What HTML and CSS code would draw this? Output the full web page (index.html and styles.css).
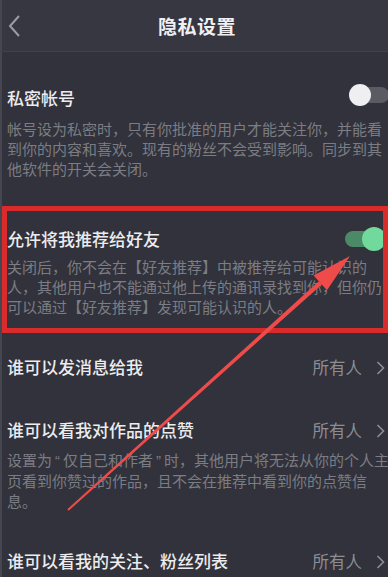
FILE: index.html
```html
<!DOCTYPE html>
<html lang="zh-CN">
<head>
<meta charset="utf-8">
<title>隐私设置</title>
<link rel="stylesheet" href="styles.css">
</head>
<body>
<div class="page">
  <header class="topbar">
    <svg class="back" width="14" height="24" viewBox="0 0 14 24"><path d="M12 2 L3 12 L12 22" fill="none" stroke="#9c9da3" stroke-width="2"/></svg>
    <h1 class="page-title">隐私设置</h1>
  </header>
  <main class="list">
    <section class="item item-private">
      <div class="row">
        <span class="title">私密帐号</span>
        <span class="switch switch-off"><span class="knob"></span></span>
      </div>
      <p class="desc">帐号设为私密时，只有你批准的用户才能关注你，并能看<br>到你的内容和喜欢。现有的粉丝不会受到影响。同步到其<br>他软件的开关会关闭。</p>
    </section>
    <section class="item item-recommend">
      <div class="row">
        <span class="title">允许将我推荐给好友</span>
        <span class="switch switch-on"><span class="knob"></span></span>
      </div>
      <p class="desc">关闭后，你不会在【好友推荐】中被推荐给可能认识的<br>人，其他用户也不能通过他上传的通讯录找到你，但你仍<br>可以通过【好友推荐】发现可能认识的人。</p>
    </section>
    <section class="item item-message">
      <div class="row">
        <span class="title">谁可以发消息给我</span>
        <span class="value">所有人<svg class="chev" width="9" height="14" viewBox="0 0 9 14"><path d="M1.5 1 L7.5 7 L1.5 13" fill="none" stroke="#8d8e94" stroke-width="1.6"/></svg></span>
      </div>
    </section>
    <section class="item item-likes">
      <div class="row">
        <span class="title">谁可以看我对作品的点赞</span>
        <span class="value">所有人<svg class="chev" width="9" height="14" viewBox="0 0 9 14"><path d="M1.5 1 L7.5 7 L1.5 13" fill="none" stroke="#8d8e94" stroke-width="1.6"/></svg></span>
      </div>
      <p class="desc">设置为<span class="q">“</span>仅自己和作者<span class="q">”</span>时，其他用户将无法从你的个人主<br>页看到你赞过的作品，且不会在推荐中看到你的点赞信<br>息。</p>
    </section>
    <section class="item item-follow">
      <div class="row">
        <span class="title">谁可以看我的关注、粉丝列表</span>
        <span class="value">所有人<svg class="chev" width="9" height="14" viewBox="0 0 9 14"><path d="M1.5 1 L7.5 7 L1.5 13" fill="none" stroke="#8d8e94" stroke-width="1.6"/></svg></span>
      </div>
    </section>
  </main>
  <div class="highlight"></div>
  <svg class="arrow" width="388" height="577" viewBox="0 0 388 577">
    <polygon points="67.3,509.3 318.8,281.2 321.8,284.4 68.7,510.7" fill="#ef4b4b"/>
    <polygon points="350,256 327,290.2 313.6,275.4" fill="#ef4b4b"/>
  </svg>
</div>
</body>
</html>
```

FILE: styles.css
```css
* { box-sizing: border-box; }
html, body { margin: 0; padding: 0; }
body {
  background: #31323b;
  font-family: "Noto Sans CJK SC", "Noto Sans", sans-serif;
}
.page {
  position: relative;
  width: 388px;
  height: 577px;
  overflow: hidden;
  background: #31323b;
  box-shadow: inset 2px 0 #45464f;
}
.topbar {
  height: 52px;
  display: flex;
  align-items: center;
  justify-content: center;
  position: relative;
  background: #363741;
  border-bottom: 1px solid #40414b;
  box-shadow: inset 2px 0 #45464f;
}
.back {
  position: absolute;
  left: 7px;
  top: 14px;
}
.page-title {
  margin: 0 0 0 6px;
  font-size: 19px;
  font-weight: 700;
  color: #f0f0f2;
  letter-spacing: 0.5px;
}
.list {
  display: flex;
  flex-direction: column;
  padding: 0 3px 0 7px;
}
.row {
  display: flex;
  align-items: center;
  justify-content: space-between;
  height: 24px;
}
.title {
  font-size: 17px;
  line-height: 24px;
  color: #ececee;
  font-weight: 500;
}
.desc {
  margin: 0;
  font-size: 15px;
  line-height: 20px;
  color: #7c7d84;
  white-space: nowrap;
}
.q {
  font-family: "Liberation Sans", sans-serif;
  padding: 0 3px;
}
.item-private { margin-top: 34px; }
.item-private .desc { margin-top: 9px; }
.item-recommend { margin-top: 48px; }
.item-recommend .desc { margin-top: 6px; }
.item-message { margin-top: 38px; }
.item-likes { margin-top: 39px; }
.item-likes .desc { margin-top: 8px; }
.item-follow { margin-top: 38px; }

.switch {
  position: relative;
  display: block;
  height: 16px;
  border-radius: 8px;
}
.switch-off {
  width: 38px;
  margin-right: -4px;
  background: #5a5b63;
  margin-top: -6px;
}
.switch-off .knob {
  position: absolute;
  left: -2px;
  top: -3px;
  width: 22px;
  height: 22px;
  border-radius: 50%;
  background: #efeff1;
}
.switch-on {
  width: 28px;
  margin-right: 12px;
  background: #4c8a67;
}
.switch-on .knob {
  position: absolute;
  left: 17px;
  top: -4px;
  width: 24px;
  height: 24px;
  border-radius: 50%;
  background: #72d99d;
}
.value {
  display: flex;
  align-items: center;
  gap: 14px;
  font-size: 16.5px;
  color: #8d8e94;
}
.chev { margin-top: 1px; }

.highlight {
  position: absolute;
  left: 2px;
  top: 206px;
  width: 386px;
  height: 127px;
  border: 5px solid #d92b2b;
}
.arrow {
  position: absolute;
  left: 0;
  top: 0;
  pointer-events: none;
}
```
